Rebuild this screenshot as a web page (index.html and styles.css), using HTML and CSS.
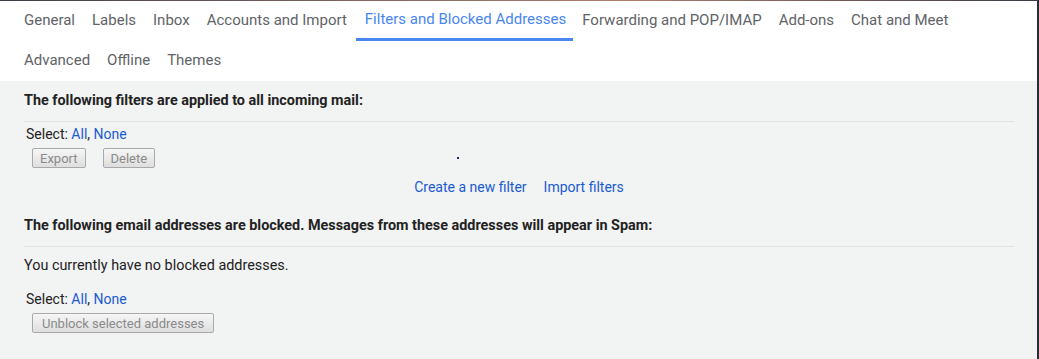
FILE: index.html
```html
<!DOCTYPE html>
<html lang="en">
<head>
  <meta charset="UTF-8">
  <title>Settings - Filters and Blocked Addresses</title>
  <link rel="stylesheet" href="styles.css">
</head>
<body>
  <div class="topline"></div>
  <div class="frame">
    <!-- Settings tabs -->
    <div class="tabs">
      <a class="tab">General</a>
      <a class="tab">Labels</a>
      <a class="tab">Inbox</a>
      <a class="tab">Accounts and Import</a>
      <a class="tab active">Filters and Blocked Addresses</a>
      <a class="tab">Forwarding and POP/IMAP</a>
      <a class="tab">Add-ons</a>
      <a class="tab">Chat and Meet</a>
      <a class="tab">Advanced</a>
      <a class="tab">Offline</a>
      <a class="tab">Themes</a>
    </div>

    <div class="content">
      <!-- Filters -->
      <div class="section-title">The following filters are applied to all incoming mail:</div>
      <div class="select-row">Select: <a class="link">All</a>, <a class="link">None</a></div>
      <div class="button-row">
        <button class="btn" disabled>Export</button>
        <button class="btn" disabled>Delete</button>
        <span class="dot"></span>
      </div>
      <div class="filter-links">
        <a class="link">Create a new filter</a>
        <a class="link">Import filters</a>
      </div>

      <!-- Blocked addresses -->
      <div class="section-title second">The following email addresses are blocked. Messages from these addresses will appear in Spam:</div>
      <div class="empty-note">You currently have no blocked addresses.</div>
      <div class="select-row lower">Select: <a class="link">All</a>, <a class="link">None</a></div>
      <div class="button-row">
        <button class="btn wide" disabled>Unblock selected addresses</button>
      </div>
    </div>
  </div>
</body>
</html>
```

FILE: styles.css
```css
body {
  margin: 0;
  font-family: Roboto, "Liberation Sans", Arial, sans-serif;
  background-color: #f2f3f3;
  color: #222;
}
.topline {
  height: 1px;
  background: linear-gradient(to right, #3c3d44, #8a6c66 40%, #b07d70 60%, #3a3a44);
}
.frame {
  border-right: 2px solid #2b2c33;
  height: 358px;
  box-sizing: border-box;
  overflow: hidden;
}
.tabs {
  display: flex;
  flex-wrap: wrap;
  background-color: #fff;
  padding: 0 62px 0 16px;
}
.tab {
  display: block;
  height: 40px;
  line-height: 39px;
  padding: 0 8px 0 8px;
  margin-right: 1px;
  font-size: 15px;
  color: #5f6368;
  box-sizing: border-box;
  white-space: nowrap;
}
.tab.active {
  color: #4a86ef;
  border-bottom: 3px solid #4a86ef;
  line-height: 37px;
  padding: 0 7px 0 9px;
}
.content {
  padding: 0 23px 0 24px;
}
.section-title {
  font-size: 14.4px;
  font-weight: bold;
  line-height: 18px;
  padding: 11px 0 11px 0;
  border-bottom: 1px solid #e1e2e2;
}
.section-title.second {
  margin-top: 10px;
  padding-bottom: 11px;
}
.link {
  color: #1a5ad3;
  cursor: pointer;
}
.select-row {
  font-size: 14px;
  line-height: 17px;
  padding: 4px 0 0 2px;
}
.select-row.lower {
  padding-top: 16px;
}
.button-row {
  display: flex;
  align-items: center;
  gap: 17px;
  padding: 5px 0 0 8px;
  position: relative;
}
.btn {
  font-family: Roboto, "Liberation Sans", Arial, sans-serif;
  font-size: 13px;
  height: 20px;
  padding: 0 7px;
  color: #8a8a8a;
  background: linear-gradient(#f6f6f6, #dedede);
  border: 1px solid #a9a9a9;
  border-radius: 2px;
}
.btn.wide {
  padding: 0 9px;
}
.dot {
  position: absolute;
  left: 433px;
  top: 14px;
  width: 2px;
  height: 2px;
  background: #1f2a70;
}
.filter-links {
  display: flex;
  justify-content: center;
  gap: 17px;
  font-size: 14px;
  line-height: 18px;
  padding-top: 10px;
}
.empty-note {
  font-size: 14.4px;
  line-height: 18px;
  padding-top: 10px;
}
```
